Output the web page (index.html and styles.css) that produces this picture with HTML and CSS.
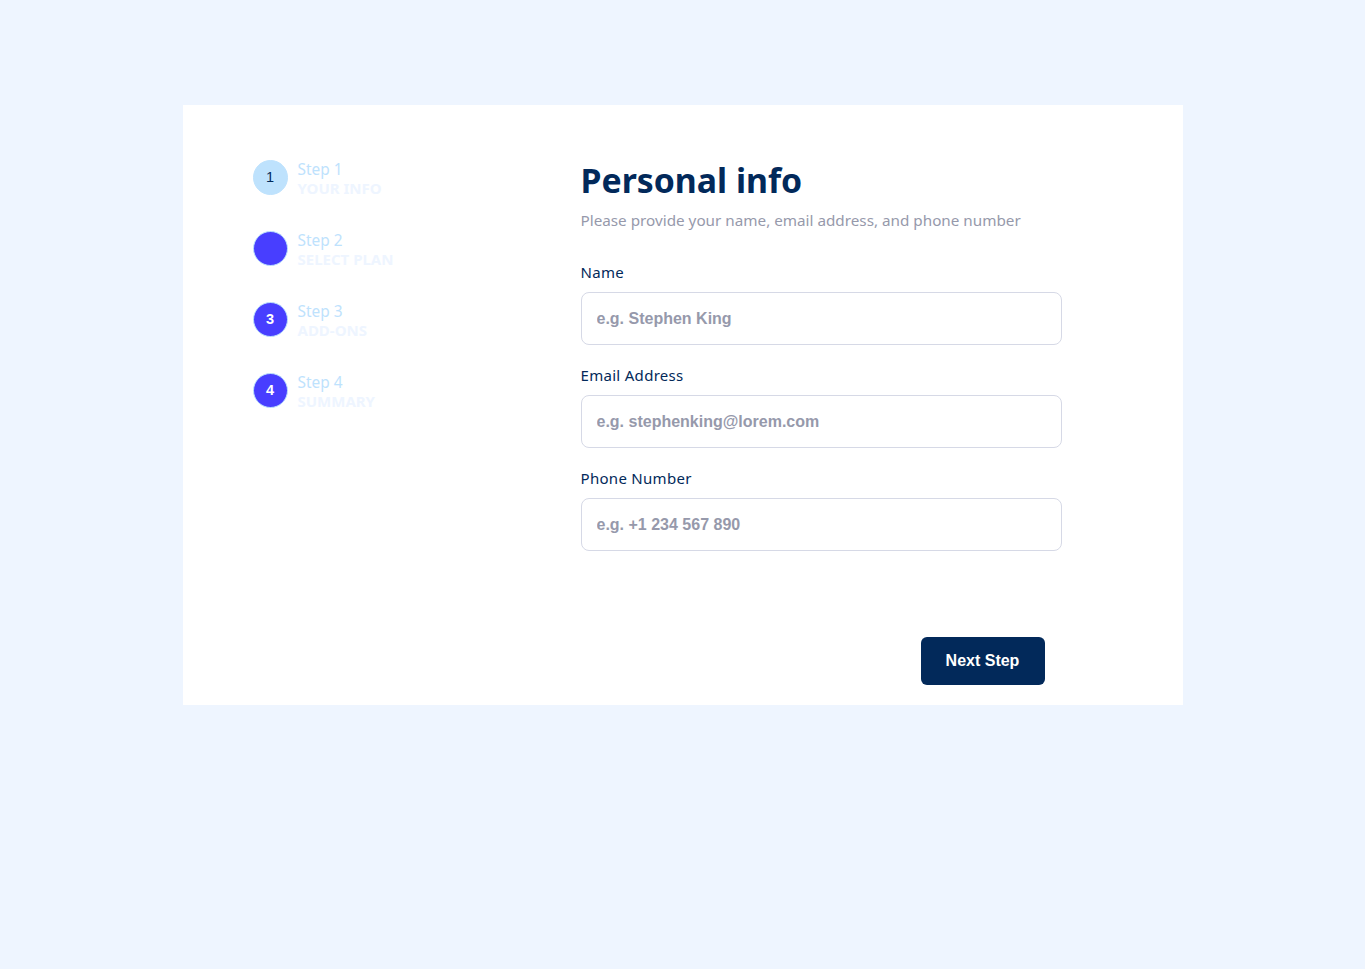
FILE: index.html
```html
<!DOCTYPE html>
<html lang="en">
<head>
<meta charset="utf-8">
<title>Personal info</title>
<link rel="stylesheet" href="styles.css">
</head>
<body>
<main class="card">
  <aside class="sidebar">
    <ol class="steps">
      <li class="step">
        <span class="num num-active">1</span>
        <span class="step-text"><span class="step-label">Step 1</span><span class="step-name">YOUR INFO</span></span>
      </li>
      <li class="step">
        <span class="num num-blank">2</span>
        <span class="step-text"><span class="step-label">Step 2</span><span class="step-name">SELECT PLAN</span></span>
      </li>
      <li class="step">
        <span class="num">3</span>
        <span class="step-text"><span class="step-label">Step 3</span><span class="step-name">ADD-ONS</span></span>
      </li>
      <li class="step">
        <span class="num">4</span>
        <span class="step-text"><span class="step-label">Step 4</span><span class="step-name">SUMMARY</span></span>
      </li>
    </ol>
  </aside>
  <section class="content">
    <h1 class="title">Personal info</h1>
    <p class="subtitle">Please provide your name, email address, and phone number</p>
    <form class="form">
      <label class="field">
        <span class="label">Name</span>
        <input class="input" type="text" placeholder="e.g. Stephen King">
      </label>
      <label class="field">
        <span class="label">Email Address</span>
        <input class="input" type="email" placeholder="e.g. stephenking@lorem.com">
      </label>
      <label class="field">
        <span class="label">Phone Number</span>
        <input class="input" type="tel" placeholder="e.g. +1 234 567 890">
      </label>
    </form>
    <div class="actions">
      <button class="next" type="button">Next Step</button>
    </div>
  </section>
</main>
</body>
</html>
```

FILE: styles.css
```css
* { box-sizing: border-box; }
html, body { margin: 0; padding: 0; }
body {
  background: #eef5ff;
  font-family: "Noto Sans", "Open Sans", sans-serif;
  min-height: 969px;
  padding-top: 105px;
}
.card {
  width: 1000px;
  height: 600px;
  margin: 0 auto;
  background: #ffffff;
  display: grid;
  grid-template-columns: 398px 1fr;
}
.sidebar {
  padding: 55px 0 0 70px;
}
.steps {
  list-style: none;
  margin: 0;
  padding: 0;
  display: flex;
  flex-direction: column;
  gap: 37px;
}
.step {
  display: flex;
  align-items: center;
  gap: 10px;
  height: 34px;
}
.num {
  width: 35px;
  height: 35px;
  border-radius: 50%;
  background: #483eff;
  border: 1px solid #bee2fd;
  color: #ffffff;
  font-family: "Liberation Sans", Arial, sans-serif;
  font-weight: 700;
  font-size: 14.5px;
  display: flex;
  align-items: center;
  justify-content: center;
  flex: none;
}
.num-active {
  background: #bee2fd;
  color: #02295a;
  font-weight: 400;
}
.num-blank { color: #483eff; }
.step-text {
  display: flex;
  flex-direction: column;
  line-height: 18px;
  font-size: 15.4px;
  margin-top: 4px;
}
.step-label { color: #bee2fd; }
.step-name { color: #eef5ff; font-weight: 700; font-size: 15px; }
.content {
  padding: 55px 121px 0 0;
  display: flex;
  flex-direction: column;
}
.title {
  margin: 0;
  font-size: 33.8px;
  line-height: 40px;
  font-weight: 700;
  color: #02295a;
}
.subtitle {
  margin: 10px 0 0;
  font-size: 15.25px;
  line-height: 20px;
  color: #9699ab;
}
.form {
  margin-top: 32px;
  display: flex;
  flex-direction: column;
  gap: 20px;
}
.field {
  display: flex;
  flex-direction: column;
  gap: 9px;
}
.label {
  font-size: 15px;
  line-height: 21px;
  color: #02295a;
  letter-spacing: 0.3px;
}
.input {
  width: 481px;
  height: 53px;
  border: 1px solid #d6d9e6;
  border-radius: 8px;
  padding: 0 15px;
  font-family: "Liberation Sans", Arial, sans-serif;
  font-weight: 700;
  font-size: 16px;
  color: #02295a;
  background: #ffffff;
  outline: none;
}
.input::placeholder { color: #9699ab; }
.actions {
  display: flex;
  justify-content: flex-end;
  margin-top: 86px;
  padding-right: 17px;
}
.next {
  width: 124px;
  height: 48px;
  border: none;
  border-radius: 6px;
  background: #02295a;
  color: #ffffff;
  font-family: "Liberation Sans", Arial, sans-serif;
  font-weight: 700;
  font-size: 16px;
  cursor: pointer;
}
```
